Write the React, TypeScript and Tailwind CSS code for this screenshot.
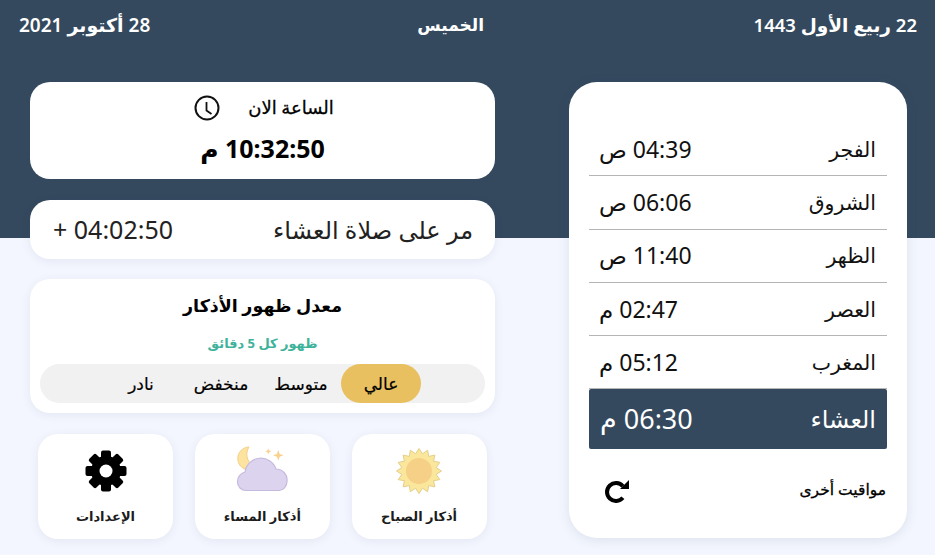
import React from 'react';

const prayers = [
  { name: 'الفجر', time: '04:39 ص' },
  { name: 'الشروق', time: '06:06 ص' },
  { name: 'الظهر', time: '11:40 ص' },
  { name: 'العصر', time: '02:47 م' },
  { name: 'المغرب', time: '05:12 م' },
];

const sunPoints = Array.from({ length: 32 }, (_, i) => {
  const r = i % 2 === 0 ? 22.5 : 17.5;
  const a = (i * Math.PI) / 16;
  return `${(24 + r * Math.sin(a)).toFixed(2)},${(24 - r * Math.cos(a)).toFixed(2)}`;
}).join(' ');

function SunIcon() {
  return (
    <svg viewBox="0 0 48 48" className="w-[48px] h-[48px]">
      <polygon points={sunPoints} fill="#fbe79c" stroke="#e3cf8b" strokeWidth="1" strokeLinejoin="round" />
      <circle cx="24" cy="24" r="13" fill="#f5d086" />
    </svg>
  );
}

function NightIcon() {
  return (
    <svg viewBox="0 0 54 52" className="w-[54px] h-[52px]">
      <path d="M14 2A11.500 11.500 0 1 0 22 22A13 13 0 0 1 14 2Z" fill="#fde3a0" stroke="#f3cf85" strokeWidth="1" />
      <path d="M43.300 5l1.400 3.900 3.900 1.400-3.900 1.400-1.400 3.900-1.400-3.900-3.900-1.400 3.900-1.400z" fill="#f9d28e" />
      <path d="M33.300 3.300l.9 2.100 2.100.9-2.100.9-.9 2.100-.9-2.100-2.100-.9 2.100-.9z" fill="#f9d28e" />
      <path d="M11 45.500A8.500 8.500 0 0 1 2.500 37A10 10 0 0 1 10 27A16 16 0 0 1 41 24A11 11 0 0 1 52 36.500A9 9 0 0 1 44 45.500Z" fill="#dcd3ef" stroke="#c5bade" strokeWidth="1.200" strokeLinejoin="round" />
    </svg>
  );
}

function GearIcon() {
  return (
    <svg viewBox="0 0 42 42" className="w-[42px] h-[42px]">
      {[0, 45, 90, 135, 180, 225, 270, 315].map((deg) => (
        <rect key={deg} x="16" y="0.500" width="10" height="12" rx="2" fill="#000" transform={`rotate(${deg} 21 21)`} />
      ))}
      <circle cx="21" cy="21" r="15" fill="#000" />
      <circle cx="21" cy="21" r="6.500" fill="#fff" />
    </svg>
  );
}

function ClockIcon() {
  return (
    <svg viewBox="0 0 26 26" fill="none" stroke="#111" className="w-[26px] h-[26px]">
      <circle cx="13" cy="13" r="11.500" strokeWidth="2" />
      <path d="M12.500 7V15.500L17.500 19" strokeWidth="1.800" />
    </svg>
  );
}

function RefreshIcon() {
  return (
    <svg viewBox="0 0 26 24" className="w-[26px] h-[24px] mt-[4px]">
      <path d="M18.900 18.800A9 9 0 1 1 18.900 7.200" fill="none" stroke="#000" strokeWidth="4" />
      <path d="M25 1V10H16Z" fill="#000" />
    </svg>
  );
}

function ActionCard({ icon, label }: { icon: React.ReactNode; label: string }) {
  return (
    <div className="w-[135px] h-[105px] bg-white rounded-[20px] shadow-[0_2px_10px_rgba(50,70,110,0.08)] flex flex-col items-center pt-[11px]">
      <div className="h-[52px] flex items-center justify-center">{icon}</div>
      <span className="mt-[10px] text-[13px] font-bold text-[#1c1c1c]">{label}</span>
    </div>
  );
}

export default function App() {
  return (
    <div
      dir="rtl"
      className="w-[935px] h-[555px] overflow-hidden bg-[linear-gradient(#34495e_0,#34495e_238px,#f3f6fe_238px)] font-['Noto_Sans','DejaVu_Sans',sans-serif] text-black"
    >
      {/* date bar */}
      <div className="h-[50px] flex items-center pr-[18px] pl-[19px] text-white font-semibold">
        <span className="w-[433px] text-[18.500px]">22 ربيع الأول 1443</span>
        <span className="flex-1 text-[17px]">الخميس</span>
        <span className="text-[19px]">28 أكتوبر 2021</span>
      </div>

      <div className="flex mt-[32px] pr-[28px] pl-[30px] justify-between">
        {/* prayer times */}
        <div className="w-[338px] h-[456px] bg-white rounded-[28px] shadow-[0_2px_12px_rgba(50,70,110,0.12)] pt-[41px] px-[20px]">
          {prayers.map((p) => (
            <div key={p.name} className="h-[53.300px] flex items-center justify-between pr-[11px] pl-[10px] border-b border-[#b5b5b5] text-[#111]">
              <span className="text-[20.500px]">{p.name}</span>
              <span className="text-[23px]">{p.time}</span>
            </div>
          ))}
          <div className="h-[60px] flex items-center justify-between pr-[11px] pl-[11px] bg-[#34495e] rounded-[2px] text-white">
            <span className="text-[24px]">العشاء</span>
            <span className="text-[27px]">06:30 م</span>
          </div>
          <div className="mt-[17px] h-[46px] flex items-center justify-between pr-[1px] pl-[15px]">
            <span className="text-[15.500px] [-webkit-text-stroke:0.3px_black]">مواقيت أخرى</span>
            <RefreshIcon />
          </div>
        </div>

        {/* left column */}
        <div className="w-[465px] flex flex-col">
          <div className="h-[97px] bg-white rounded-[20px] flex flex-col items-center pt-[12px]">
            <div className="flex items-center gap-[28px] pl-[3px]">
              <span className="text-[18px] [-webkit-text-stroke:0.3px_black]">الساعة الان</span>
              <ClockIcon />
            </div>
            <div className="mt-[9px] text-[25px] font-bold">10:32:50 م</div>
          </div>

          <div className="mt-[21px] h-[59px] bg-white rounded-[20px] shadow-[0_2px_10px_rgba(50,70,110,0.08)] flex items-center justify-between pr-[22px] pl-[23px] text-[#222]">
            <span className="text-[24px]">مر على صلاة العشاء</span>
            <span className="text-[25px]">04:02:50 +</span>
          </div>

          <div className="mt-[20px] h-[134px] bg-white rounded-[20px] shadow-[0_2px_10px_rgba(50,70,110,0.08)] flex flex-col items-center px-[10px] pt-[13px]">
            <div className="text-[17.500px] font-bold">معدل ظهور الأذكار</div>
            <div className="mt-[16px] text-[13px] font-bold text-[#3eb39b]">ظهور كل 5 دقائق</div>
            <div className="mt-[10px] w-full h-[39px] bg-[#f1f1f1] rounded-full flex items-center pr-[64px] text-[17px] [-webkit-text-stroke:0.2px_black]">
              <span className="w-[80px] h-[39px] bg-[#e9c060] rounded-full flex items-center justify-center">عالي</span>
              <span className="w-[80px] text-center">متوسط</span>
              <span className="w-[80px] text-center">منخفض</span>
              <span className="w-[80px] text-center">نادر</span>
            </div>
          </div>

          <div className="mt-[21px] flex justify-between pr-[8.500px] pl-[8px]">
            <ActionCard icon={<SunIcon />} label="أذكار الصباح" />
            <ActionCard icon={<NightIcon />} label="أذكار المساء" />
            <ActionCard icon={<GearIcon />} label="الإعدادات" />
          </div>
        </div>
      </div>
    </div>
  );
}
